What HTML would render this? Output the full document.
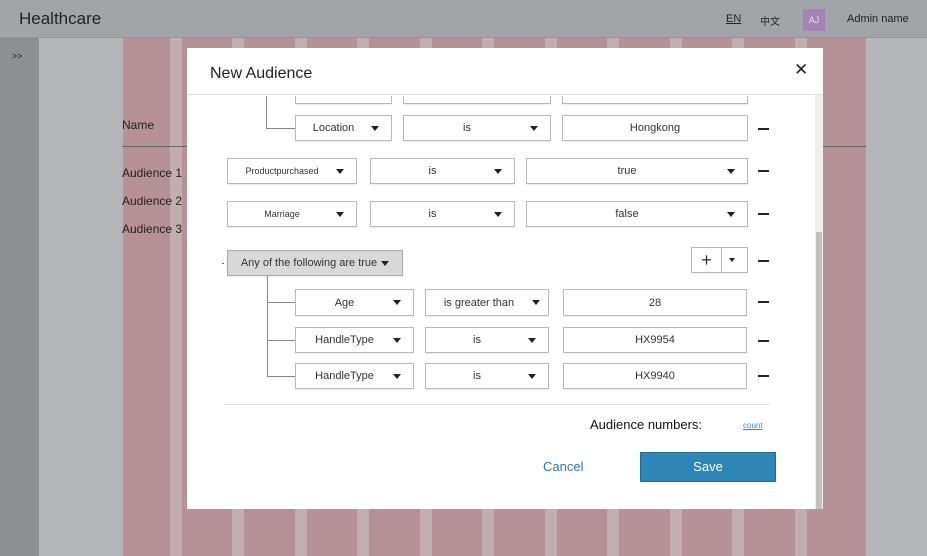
<!DOCTYPE html>
<html><head><meta charset="utf-8"><style>
*{margin:0;padding:0;box-sizing:border-box}
body{width:927px;height:556px;overflow:hidden;position:relative;background:#b5b6ba;font-family:"Liberation Sans","Noto Sans CJK SC",sans-serif;color:#222}
.a{position:absolute}
.hdr{left:0;top:0;width:927px;height:38px;background:#a3a4a8;border-bottom:1px solid #95969a}
.side{left:0;top:38px;width:39px;height:518px;background:#8e8f93}
.stripe{top:38px;height:518px;background:#b69198}
.gap{top:38px;height:518px;background:#c2aeb2}
.modal{left:187px;top:48px;width:636px;height:461px;background:#fff;overflow:hidden}
.mh{left:0;top:0;width:636px;height:47px;border-bottom:1px solid #ddd;background:#fff;z-index:2}
.box{border:1px solid #b9b9b9;background:#fff;font-size:11px;color:#333;display:flex;align-items:center;justify-content:center;box-shadow:0 1px 1px rgba(0,0,0,.08)}
.box .t{flex:1;text-align:center}
.arr{width:0;height:0;border-left:4px solid transparent;border-right:4px solid transparent;border-top:5px solid #222;margin-right:12px}
.minus{width:11px;height:2px;background:#222}
.ln{background:#888}
</style></head><body>
<div class="a hdr"></div>
<div class="a" style="left:19px;top:9px;font-size:17px;color:#222">Healthcare</div>
<div class="a" style="left:726px;top:13px;font-size:11px;text-decoration:underline">EN</div>
<div class="a" style="left:760px;top:13px;font-size:10px">中文</div>
<div class="a" style="left:803px;top:9px;width:22px;height:22px;background:#a583b5;color:#e8dcef;font-size:9px;text-align:center;line-height:22px">AJ</div>
<div class="a" style="left:847px;top:13px;font-size:11px">Admin name</div>
<div class="a side"></div>
<div class="a" style="left:12px;top:51px;font-size:9px;color:#222">&gt;&gt;</div>
<div class="a stripe" style="left:123px;width:743px"></div>
<div class="a gap" style="left:170px;width:12px"></div>
<div class="a gap" style="left:232px;width:12px"></div>
<div class="a gap" style="left:295px;width:12px"></div>
<div class="a gap" style="left:357px;width:12px"></div>
<div class="a gap" style="left:420px;width:12px"></div>
<div class="a gap" style="left:482px;width:12px"></div>
<div class="a gap" style="left:545px;width:12px"></div>
<div class="a gap" style="left:607px;width:12px"></div>
<div class="a gap" style="left:670px;width:12px"></div>
<div class="a gap" style="left:732px;width:12px"></div>
<div class="a gap" style="left:795px;width:12px"></div>
<div class="a" style="left:122px;top:118px;font-size:12px">Name</div>
<div class="a" style="left:122px;top:146px;width:744px;height:1px;background:#666"></div>
<div class="a" style="left:122px;top:166px;font-size:12px">Audience 1</div>
<div class="a" style="left:122px;top:194px;font-size:12px">Audience 2</div>
<div class="a" style="left:122px;top:222px;font-size:12px">Audience 3</div>

<div class="a modal">
 <div class="a mh"><div class="a" style="left:23px;top:17px;font-size:16px">New Audience</div>
 <div class="a" style="left:607px;top:12px;font-size:17px">✕</div></div>
 <div class="a" style="left:628px;top:47px;width:8px;height:414px;background:#eee"></div>
 <div class="a" style="left:629px;top:184px;width:6px;height:277px;background:#c1c1c1"></div>
</div>
<div class="a" style="left:187px;top:48px;width:636px;height:461px;overflow:hidden;clip-path:inset(48px 0 0 0)">
<div class="a" style="left:-187px;top:-48px;width:927px;height:556px">
 <div class="a box" style="left:295px;top:78px;width:97px;height:26px"></div>
 <div class="a box" style="left:403px;top:78px;width:148px;height:26px"></div>
 <div class="a box" style="left:562px;top:78px;width:186px;height:26px"></div>
</div></div>
<div class="a ln" style="left:266px;top:96px;width:1px;height:32px"></div>
<div class="a ln" style="left:266px;top:128px;width:29px;height:1px"></div>
<div class="a box" style="left:295px;top:115px;width:97px;height:26px"><span class="t">Location</span><i class="arr"></i></div>
<div class="a box" style="left:403px;top:115px;width:148px;height:26px"><span class="t">is</span><i class="arr"></i></div>
<div class="a box" style="left:562px;top:115px;width:186px;height:26px"><span class="t">Hongkong</span></div>
<div class="a minus" style="left:758px;top:128px"></div>

<div class="a box" style="left:227px;top:158px;width:130px;height:26px;font-size:9px"><span class="t">Productpurchased</span><i class="arr"></i></div>
<div class="a box" style="left:370px;top:158px;width:145px;height:26px"><span class="t">is</span><i class="arr"></i></div>
<div class="a box" style="left:526px;top:158px;width:222px;height:26px"><span class="t">true</span><i class="arr"></i></div>
<div class="a minus" style="left:758px;top:170px"></div>

<div class="a box" style="left:227px;top:201px;width:130px;height:26px;font-size:9px"><span class="t">Marriage</span><i class="arr"></i></div>
<div class="a box" style="left:370px;top:201px;width:145px;height:26px"><span class="t">is</span><i class="arr"></i></div>
<div class="a box" style="left:526px;top:201px;width:222px;height:26px"><span class="t">false</span><i class="arr"></i></div>
<div class="a minus" style="left:758px;top:213px"></div>

<div class="a" style="left:222px;top:263px;width:2px;height:1px;background:#e33"></div>
<div class="a box" style="left:227px;top:250px;width:176px;height:26px;background:#d9d9d9;border-color:#aaa"><span style="margin-right:4px">Any of the following are true</span><i class="arr" style="margin-right:0"></i></div>
<div class="a box" style="left:691px;top:247px;width:57px;height:26px;justify-content:flex-start"><span style="width:35px;text-align:center;font-size:18px;border-right:1px solid #bbb;line-height:24px">+</span><i class="arr" style="margin-left:7px;border-left-width:3px;border-right-width:3px;border-top-width:4px"></i></div>
<div class="a minus" style="left:758px;top:260px"></div>

<div class="a ln" style="left:267px;top:276px;width:1px;height:100px"></div>
<div class="a ln" style="left:267px;top:302px;width:28px;height:1px"></div>
<div class="a ln" style="left:267px;top:340px;width:28px;height:1px"></div>
<div class="a ln" style="left:267px;top:376px;width:28px;height:1px"></div>
<div class="a box" style="left:295px;top:289px;width:119px;height:27px"><span class="t">Age</span><i class="arr"></i></div>
<div class="a box" style="left:425px;top:289px;width:124px;height:27px"><span class="t">is greater than</span><i class="arr" style="margin-right:8px"></i></div>
<div class="a box" style="left:563px;top:289px;width:184px;height:27px"><span class="t">28</span></div>
<div class="a minus" style="left:758px;top:301px"></div>
<div class="a box" style="left:295px;top:327px;width:119px;height:26px"><span class="t">HandleType</span><i class="arr"></i></div>
<div class="a box" style="left:425px;top:327px;width:124px;height:26px"><span class="t">is</span><i class="arr"></i></div>
<div class="a box" style="left:563px;top:327px;width:184px;height:26px"><span class="t">HX9954</span></div>
<div class="a minus" style="left:758px;top:340px"></div>
<div class="a box" style="left:295px;top:363px;width:119px;height:26px"><span class="t">HandleType</span><i class="arr"></i></div>
<div class="a box" style="left:425px;top:363px;width:124px;height:26px"><span class="t">is</span><i class="arr"></i></div>
<div class="a box" style="left:563px;top:363px;width:184px;height:26px"><span class="t">HX9940</span></div>
<div class="a minus" style="left:758px;top:375px"></div>

<div class="a" style="left:224px;top:404px;width:545px;height:1px;background:#ddd"></div>
<div class="a" style="left:590px;top:417px;font-size:13px;color:#111">Audience numbers:</div>
<div class="a" style="left:743px;top:421px;font-size:8px;color:#3a8ad0;text-decoration:underline">count</div>
<div class="a" style="left:543px;top:459px;font-size:13px;color:#2a7bb0">Cancel</div>
<div class="a" style="left:640px;top:452px;width:136px;height:30px;background:#2e86b6;border:1px solid #236c94;color:#fff;font-size:13px;text-align:center;line-height:28px">Save</div>
</body></html>
